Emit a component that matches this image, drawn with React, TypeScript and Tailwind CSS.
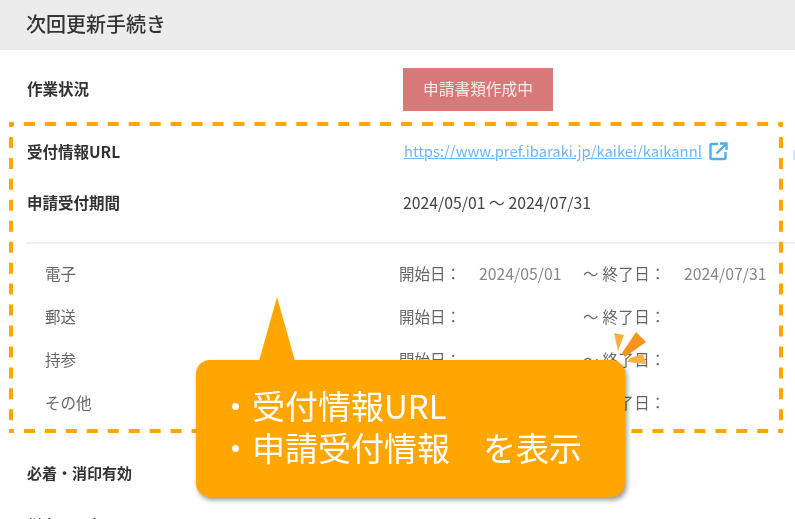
const FONT = "font-['Noto_Sans_CJK_JP','Noto_Sans',sans-serif]";

const ROWS = [
  { label: "電子", start: "2024/05/01", end: "2024/07/31" },
  { label: "郵送", start: "", end: "" },
  { label: "持参", start: "", end: "" },
  { label: "その他", start: "", end: "" },
];

const DASH = { stroke: "#ffa600", strokeWidth: 4, strokeDasharray: "11 9.95", strokeDashoffset: 6 };

function ExternalIcon() {
  return (
    <svg width="19" height="19" viewBox="0 0 19 19" fill="none" stroke="#4fade8" strokeWidth="2.4" className="ml-[7px]">
      <path d="M9 2H3a1.500 1.500 0 0 0-1.500 1.500v12A1.500 1.500 0 0 0 3 17h12a1.500 1.500 0 0 0 1.500-1.500V10" />
      <path d="M7.500 11.500 16.500 2.500M11 1.500h6.500V8" />
    </svg>
  );
}

function DashedFrame() {
  return (
    <svg width="795" height="519" className="absolute left-0 top-0">
      <line x1="9" y1="124" x2="783" y2="124" {...DASH} />
      <line x1="9" y1="431" x2="783" y2="431" {...DASH} />
      <line x1="11" y1="122" x2="11" y2="429" {...DASH} />
      <line x1="781" y1="122" x2="781" y2="429" {...DASH} />
    </svg>
  );
}

function Sparks() {
  return (
    <svg width="34" height="34" viewBox="0 0 34 34" className="absolute left-[613px] top-[331px]">
      <path d="M1 2 11 4 5 20Z" fill="#fbb040" />
      <path d="M23 1 33 11 12 26 9 22Z" fill="#f7941e" />
      <path d="M30 23 33 33 14 31 17 27Z" fill="#fbb040" />
    </svg>
  );
}

function Callout() {
  return (
    <div className="absolute left-[196px] top-[360px] h-[137px] w-[429px] rounded-[14px] bg-[#ffa600] pl-[23px] pt-[24px] shadow-[2px_3px_5px_rgba(0,0,0,0.4)]">
      <svg width="36" height="64" viewBox="0 0 36 64" className="absolute left-[63px] top-[-63px]">
        <path d="M18 0 36 64H0Z" fill="#ffa600" />
      </svg>
      <p className="text-[33px] leading-[42px] text-white">・受付情報URL</p>
      <p className="text-[33px] leading-[42px] text-white">・申請受付情報　を表示</p>
    </div>
  );
}

export default function App() {
  return (
    <div className={`relative h-[519px] w-[795px] overflow-hidden bg-white blur-[0.5px] ${FONT}`}>
      <div className="flex h-[50px] items-center bg-[#ececec] pb-[2px] pl-[26px] text-[20px] font-medium text-[#333]">
        次回更新手続き
      </div>

      <div className="flex h-[80px] items-center pb-[2px] pl-[27px] text-[15.5px] font-bold text-[#333]">
        <span className="w-[376px]">作業状況</span>
        <span className="flex h-[43px] w-[150px] items-center justify-center bg-[#d77979] text-[15.7px] font-normal text-[#fbeaea]">
          申請書類作成中
        </span>
      </div>

      <div className="flex h-[42px] items-center pl-[27px] pt-[1px] text-[15.5px] font-bold text-[#333]">
        <span className="w-[377px]">受付情報URL</span>
        <span className="flex items-center">
          <a className="text-[14.8px] font-normal text-[#72b5f5] underline">https://www.pref.ibaraki.jp/kaikei/kaikannl</a>
          <ExternalIcon />
        </span>
      </div>

      <div className="mb-[8px] flex h-[62px] items-center pl-[27px] text-[15.5px] font-bold text-[#333]">
        <span className="w-[376px]">申請受付期間</span>
        <span className="text-[15.8px] font-normal text-[#444]">2024/05/01 〜 2024/07/31</span>
      </div>

      <div className="ml-[26px] border-t-2 border-[#eef0f0] pt-[8px]">
        {ROWS.map((row) => (
          <div key={row.label} className="flex h-[43px] items-center pl-[19px] text-[15.500px] text-[#666]">
            <span className="w-[354px]">{row.label}</span>
            <span className="w-[80px]">開始日：</span>
            <span className="w-[104px] text-[15.8px] text-[#888]">{row.start}</span>
            <span className="w-[101px] tracking-[0.3px]">〜 終了日：</span>
            <span className="text-[15.8px] text-[#888]">{row.end}</span>
          </div>
        ))}
      </div>

      <div className="mt-[38px] pl-[27px] text-[15px] font-bold text-[#333]">必着・消印有効</div>
      <div className="mt-[29px] pl-[27px] text-[15px] font-bold text-[#333]">従事日の表示</div>

      <span className="absolute left-[793px] top-[150px] h-[10px] w-[2px] bg-[#d5e8fa]" />
      <DashedFrame />
      <Sparks />
      <Callout />
    </div>
  );
}
